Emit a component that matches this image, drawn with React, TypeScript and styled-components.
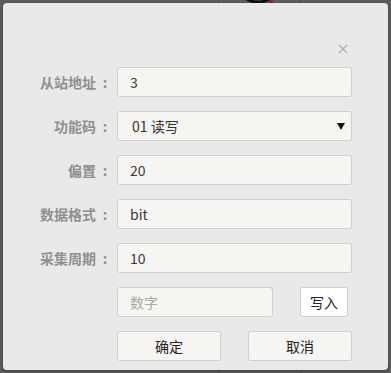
import styled, { createGlobalStyle } from 'styled-components'

const GlobalStyle = createGlobalStyle`
  html, body {
    margin: 0;
    padding: 0;
    background: #5c5c5c;
  }
  body {
    font-family: 'Noto Sans CJK SC', 'Noto Sans', sans-serif;
    font-size: 14px;
  }
`

const Backdrop = styled.div`
  position: relative;
  width: 391px;
  height: 373px;
  padding: 3px;
  box-sizing: border-box;
  overflow: hidden;
`

const GridLine = styled.div<{ $left: number }>`
  position: absolute;
  top: 0;
  bottom: 0;
  left: ${(p) => p.$left}px;
  width: 1px;
  background: #4a4a4a;
`

const Ring = styled.svg`
  position: absolute;
  left: 228px;
  top: -40px;
`

const Modal = styled.div`
  position: relative;
  width: 385px;
  height: 367px;
  box-sizing: border-box;
  background: #e9e9e9;
  border-radius: 4px;
  box-shadow: 0 1px 3px rgba(0, 0, 0, 0.35);
  padding: 37px 36px 0 0;
  display: flex;
  flex-direction: column;
`

const Header = styled.div`
  display: flex;
  justify-content: flex-end;
  height: 27px;
  padding-right: 2px;
`

const Close = styled.button`
  border: none;
  background: none;
  padding: 0;
  width: 14px;
  height: 14px;
  cursor: pointer;
  display: flex;
  align-items: flex-start;
  justify-content: center;
  margin-top: 4px;
`

const Form = styled.div`
  display: flex;
  flex-direction: column;
  gap: 14px;
`

const Row = styled.div`
  display: grid;
  grid-template-columns: 109px 1fr;
  column-gap: 5px;
  align-items: center;
  height: 30px;
`

const Label = styled.label`
  display: flex;
  justify-content: flex-end;
  color: #8f8f8f;
  font-weight: 700;
  font-size: 14px;
  white-space: nowrap;
`

const Colon = styled.span`
  display: inline-block;
  width: 14px;
  text-align: center;
  padding-left: 2px;
`

const Field = styled.input`
  height: 30px;
  box-sizing: border-box;
  width: 100%;
  border: 1px solid #cfcfcf;
  border-radius: 3px;
  background: #f6f5f1;
  padding: 0 12px;
  font-family: inherit;
  font-size: 14px;
  color: #3a3a3a;
  outline: none;
  &::placeholder {
    color: #a9a9a9;
  }
`

const SelectWrap = styled.div`
  position: relative;
  height: 30px;
`

const Select = styled.select`
  appearance: none;
  height: 30px;
  width: 100%;
  box-sizing: border-box;
  border: 1px solid #cfcfcf;
  border-radius: 3px;
  background: #f6f5f1;
  padding: 0 14px;
  font-family: inherit;
  font-size: 14px;
  color: #333;
  outline: none;
`

const Arrow = styled.svg`
  position: absolute;
  right: 7px;
  top: 11px;
  pointer-events: none;
`

const Split = styled.div<{ $gap: number }>`
  display: flex;
  align-items: center;
  gap: ${(p) => p.$gap}px;
`

const Button = styled.button<{ $w: number; $bg?: string }>`
  width: ${(p) => p.$w}px;
  height: 30px;
  box-sizing: border-box;
  border: 1px solid #cfcfcf;
  border-radius: 3px;
  background: ${(p) => p.$bg || '#f6f5f1'};
  font-family: inherit;
  font-size: 14px;
  color: #222;
  padding: 0;
  cursor: pointer;
`

function TextRow({ label, value }: { label: string; value: string }) {
  return (
    <Row>
      <Label>
        {label}
        <Colon>:</Colon>
      </Label>
      <Field defaultValue={value} />
    </Row>
  )
}

export default function App() {
  return (
    <>
      <GlobalStyle />
      <Backdrop>
        <GridLine $left={218} />
        <GridLine $left={300} />
        <Ring width="60" height="60" viewBox="0 0 60 60">
          <circle cx="30" cy="20" r="22" fill="none" stroke="#111" strokeWidth="3" />
          <circle cx="43" cy="42" r="2" fill="#a01818" />
        </Ring>
        <Modal>
          <Header>
            <Close aria-label="close">
              <svg width="10" height="10" viewBox="0 0 10 10">
                <path d="M1 1 L9 9 M9 1 L1 9" stroke="#b3b3b3" strokeWidth="1.4" />
              </svg>
            </Close>
          </Header>
          <Form>
            <TextRow label="从站地址" value="3" />
            <Row>
              <Label>
                功能码
                <Colon>:</Colon>
              </Label>
              <SelectWrap>
                <Select defaultValue="01">
                  <option value="01">01 读写</option>
                  <option value="03">03 读写</option>
                </Select>
                <Arrow width="8" height="8" viewBox="0 0 8 8">
                  <path d="M0 1 L8 1 L4 8 Z" fill="#111" />
                </Arrow>
              </SelectWrap>
            </Row>
            <TextRow label="偏置" value="20" />
            <TextRow label="数据格式" value="bit" />
            <TextRow label="采集周期" value="10" />
            <Row>
              <span />
              <Split $gap={27}>
                <Field placeholder="数字" style={{ width: 156 }} />
                <Button $w={48} $bg="#ffffff">写入</Button>
              </Split>
            </Row>
            <Row>
              <span />
              <Split $gap={27}>
                <Button $w={104}>确定</Button>
                <Button $w={104}>取消</Button>
              </Split>
            </Row>
          </Form>
        </Modal>
      </Backdrop>
    </>
  )
}
